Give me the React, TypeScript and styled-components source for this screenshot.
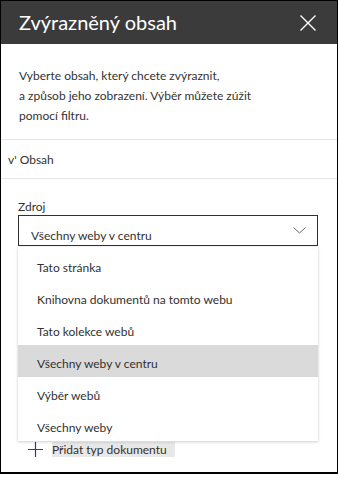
import { ReactElement } from "react";
import styled, { createGlobalStyle } from "styled-components";

const GlobalStyle = createGlobalStyle`
  html, body {
    margin: 0;
    padding: 0;
    background: #ffffff;
  }
  body {
    font-family: Lato, "Open Sans", sans-serif;
    color: #323130;
  }
`;

const Panel = styled.div`
  position: relative;
  box-sizing: border-box;
  width: 338px;
  height: 474px;
  border: 1px solid #000000;
  border-bottom-width: 2px;
  background: #ffffff;
  overflow: hidden;
`;

const Header = styled.div`
  height: 43px;
  background: #3b3b3b;
  display: flex;
  align-items: center;
  justify-content: space-between;
  padding: 0 21px 0 18px;
`;

const Title = styled.h1`
  margin: 0;
  font-size: 20px;
  font-weight: 400;
  color: #ffffff;
  padding-bottom: 2px;
`;

const CloseButton = styled.button`
  display: flex;
  padding: 0;
  border: none;
  background: none;
  color: #ffffff;
`;

const Description = styled.p`
  margin: 0;
  padding: 22px 18px 13px 18px;
  font-size: 12px;
  line-height: 20px;
  color: #333333;
  border-bottom: 1px solid #e6e6e6;
`;

const SectionToggle = styled.div`
  height: 38px;
  display: flex;
  align-items: center;
  padding-left: 7px;
  font-size: 12px;
  color: #323130;
  border-bottom: 1px solid #e6e6e6;
`;

const Field = styled.div`
  position: relative;
  padding: 19px 19px 0 17px;
`;

const Label = styled.div`
  font-size: 12px;
  line-height: 17px;
  color: #323130;
`;

const Select = styled.div`
  box-sizing: border-box;
  height: 31px;
  border: 1px solid #323130;
  display: flex;
  align-items: center;
  justify-content: space-between;
  padding: 0 11px 0 12px;
  font-size: 12px;
`;

const SelectValue = styled.span`
  padding-top: 9px;
`;

const Menu = styled.ul`
  position: absolute;
  left: 17px;
  right: 19px;
  top: 68px;
  margin: 0;
  padding: 2px 0 0 0;
  list-style: none;
  background: #ffffff;
  box-shadow: 0 1px 3px rgba(0, 0, 0, 0.18), 0 0 1px rgba(0, 0, 0, 0.12);
  z-index: 2;
`;

const MenuItem = styled.li<{ $selected?: boolean }>`
  height: 32px;
  box-sizing: border-box;
  padding: 10px 0 0 19px;
  font-size: 12px;
  line-height: 17px;
  color: #323130;
  background: ${(p) => (p.$selected ? "#dadada" : "transparent")};
`;

const AddRow = styled.div`
  display: flex;
  align-items: center;
  gap: 9px;
  margin: 196px 0 0 27px;
  font-size: 12px;
`;

const AddLabel = styled.span`
  background: #e8e8e8;
  padding: 0 8px 0 0;
  line-height: 15px;
`;

function ChevronDown() {
  return (
    <svg width="13" height="7" viewBox="0 0 13 7" fill="none">
      <path d="M0.5 0.5 L6.5 6 L12.5 0.5" stroke="#666666" strokeWidth="1" />
    </svg>
  );
}

function Plus() {
  return (
    <svg width="15" height="15" viewBox="0 0 15 15" fill="none">
      <path d="M7.5 0 V15 M0 7.5 H15" stroke="#2b3a8c" strokeWidth="1.2" />
    </svg>
  );
}

function CloseIcon() {
  return (
    <svg width="16" height="16" viewBox="0 0 16 16" fill="none">
      <path d="M0.5 0.5 L15.5 15.5 M15.5 0.5 L0.5 15.5" stroke="#ffffff" strokeWidth="1.4" />
    </svg>
  );
}

const options = [
  "Tato stránka",
  "Knihovna dokumentů na tomto webu",
  "Tato kolekce webů",
  "Všechny weby v centru",
  "Výběr webů",
  "Všechny weby",
];

export default function App(): ReactElement {
  const selected = "Všechny weby v centru";
  return (
    <>
      <GlobalStyle />
      <Panel>
        <Header>
          <Title>Zvýrazněný obsah</Title>
          <CloseButton>
            <CloseIcon />
          </CloseButton>
        </Header>
        <Description>
          Vyberte obsah, který chcete zvýraznit,
          <br />a způsob jeho zobrazení. Výběr můžete zúžit
          <br />
          pomocí filtru.
        </Description>
        <SectionToggle>v' Obsah</SectionToggle>
        <Field>
          <Label>Zdroj</Label>
          <Select>
            <SelectValue>{selected}</SelectValue>
            <ChevronDown />
          </Select>
          <Menu>
            {options.map((o) => (
              <MenuItem key={o} $selected={o === selected}>
                {o}
              </MenuItem>
            ))}
          </Menu>
        </Field>
        <AddRow>
          <Plus />
          <AddLabel>Přidat typ dokumentu</AddLabel>
        </AddRow>
      </Panel>
    </>
  );
}
